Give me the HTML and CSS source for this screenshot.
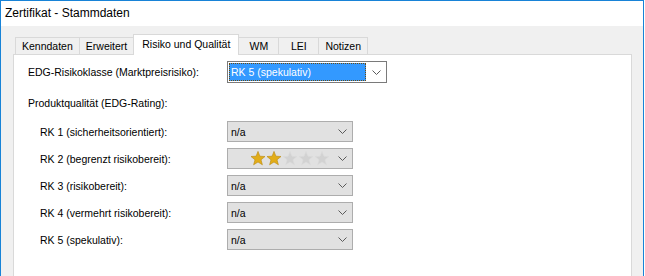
FILE: index.html
```html
<!DOCTYPE html>
<html lang="de">
<head>
    <meta charset="UTF-8">
    <title>Zertifikat - Stammdaten</title>
    <link rel="stylesheet" href="styles.css">
</head>
<body>
    <div class="window">
        <div class="titlebar">Zertifikat - Stammdaten</div>

        <div class="client">
            <div class="tabs">
                <div class="tab">Kenndaten</div>
                <div class="tab">Erweitert</div>
                <div class="tab active">Risiko und Qualität</div>
                <div class="tab">WM</div>
                <div class="tab">LEI</div>
                <div class="tab">Notizen</div>
            </div>

            <div class="panel">
                <div class="field-row">
                    <span class="field-label">EDG-Risikoklasse (Marktpreisrisiko):</span>
                    <div class="combo combo-wide combo-focus">
                        <span class="combo-value">RK 5 (spekulativ)</span>
                        <svg class="chevron" width="9" height="5" viewBox="0 0 9 5"><polyline points="0.5,0.5 4.5,4.5 8.5,0.5" /></svg>
                    </div>
                </div>

                <div class="section-label">Produktqualität (EDG-Rating):</div>

                <div class="rating-list">
                    <span class="field-label">RK 1 (sicherheitsorientiert):</span>
                    <div class="combo">
                        <span class="combo-value">n/a</span>
                        <svg class="chevron" width="9" height="5" viewBox="0 0 9 5"><polyline points="0.5,0.5 4.5,4.5 8.5,0.5" /></svg>
                    </div>

                    <span class="field-label">RK 2 (begrenzt risikobereit):</span>
                    <div class="combo">
                        <span class="stars">
                            <svg class="star on" width="16" height="15" viewBox="0 0 16 15"><polygon points="8,0.4 9.9,5.2 15,5.5 11,8.8 12.4,13.8 8,11 3.6,13.8 5,8.8 1,5.5 6.1,5.2" /></svg>
                            <svg class="star on" width="16" height="15" viewBox="0 0 16 15"><polygon points="8,0.4 9.9,5.2 15,5.5 11,8.8 12.4,13.8 8,11 3.6,13.8 5,8.8 1,5.5 6.1,5.2" /></svg>
                            <svg class="star" width="16" height="15" viewBox="0 0 16 15"><polygon points="8,0.4 9.9,5.2 15,5.5 11,8.8 12.4,13.8 8,11 3.6,13.8 5,8.8 1,5.5 6.1,5.2" /></svg>
                            <svg class="star" width="16" height="15" viewBox="0 0 16 15"><polygon points="8,0.4 9.9,5.2 15,5.5 11,8.8 12.4,13.8 8,11 3.6,13.8 5,8.8 1,5.5 6.1,5.2" /></svg>
                            <svg class="star" width="16" height="15" viewBox="0 0 16 15"><polygon points="8,0.4 9.9,5.2 15,5.5 11,8.8 12.4,13.8 8,11 3.6,13.8 5,8.8 1,5.5 6.1,5.2" /></svg>
                        </span>
                        <svg class="chevron" width="9" height="5" viewBox="0 0 9 5"><polyline points="0.5,0.5 4.5,4.5 8.5,0.5" /></svg>
                    </div>

                    <span class="field-label">RK 3 (risikobereit):</span>
                    <div class="combo">
                        <span class="combo-value">n/a</span>
                        <svg class="chevron" width="9" height="5" viewBox="0 0 9 5"><polyline points="0.5,0.5 4.5,4.5 8.5,0.5" /></svg>
                    </div>

                    <span class="field-label">RK 4 (vermehrt risikobereit):</span>
                    <div class="combo">
                        <span class="combo-value">n/a</span>
                        <svg class="chevron" width="9" height="5" viewBox="0 0 9 5"><polyline points="0.5,0.5 4.5,4.5 8.5,0.5" /></svg>
                    </div>

                    <span class="field-label">RK 5 (spekulativ):</span>
                    <div class="combo">
                        <span class="combo-value">n/a</span>
                        <svg class="chevron" width="9" height="5" viewBox="0 0 9 5"><polyline points="0.5,0.5 4.5,4.5 8.5,0.5" /></svg>
                    </div>
                </div>
            </div>
        </div>
    </div>
</body>
</html>
```

FILE: styles.css
```css
:root {
    --window-border: #1883d7;
    --face: #f0f0f0;
    --tab-border: #d9d9d9;
    --combo-bg: #e1e1e1;
    --combo-border: #adadad;
    --highlight: #3399ff;
    --text: #000;
}

* {
    margin: 0;
    padding: 0;
    box-sizing: border-box;
}

body {
    background: #fff;
    color: var(--text);
    font-family: "Liberation Sans", Arial, sans-serif;
    font-size: 10.5px;
}

.window {
    width: 644px;
    height: 276px;
    border: 1px solid var(--window-border);
    border-bottom: none;
    display: flex;
    flex-direction: column;
    overflow: hidden;
    white-space: nowrap;
}

.titlebar {
    height: 25px;
    line-height: 24px;
    padding-left: 4px;
    background: #fff;
    font-size: 12px;
}

.client {
    flex: 1;
    display: flex;
    flex-direction: column;
    background: var(--face);
    padding: 0 11px 0 12px;
}

/* tab strip */
.tabs {
    height: 28px;
    display: flex;
    align-items: flex-end;
    padding-left: 2px;
}

.tab {
    min-width: 41px;
    height: 17px;
    line-height: 16px;
    padding: 0 6px;
    margin-right: -1px;
    text-align: center;
    border: 1px solid var(--tab-border);
    border-bottom: none;
    background: var(--face);
}

.tab.active {
    height: 21px;
    line-height: 18px;
    margin-bottom: -1px;
    padding: 0 8px;
    background: #fff;
    position: relative;
    z-index: 1;
}

/* tab page */
.panel {
    flex: 1;
    background: #fff;
    border: 1px solid var(--tab-border);
    border-bottom: none;
    padding: 6px 0 0 14px;
}

.field-row {
    display: flex;
    align-items: center;
    height: 22px;
}

.field-row .field-label {
    width: 199px;
}

.section-label {
    margin-top: 12px;
    height: 16px;
    line-height: 16px;
}

.rating-list {
    margin-top: 10px;
    padding-left: 12px;
    display: grid;
    grid-template-columns: 187px 126px;
    grid-auto-rows: 21px;
    row-gap: 6px;
    align-items: center;
}

/* combo boxes */
.combo {
    height: 21px;
    display: flex;
    align-items: center;
    border: 1px solid var(--combo-border);
    background: var(--combo-bg);
    padding: 0 5px 0 3px;
}

.combo-value {
    flex: 1;
}

.combo-wide {
    width: 160px;
    height: 22px;
    border-color: #7a7a7a;
    background: #fff;
    padding: 1px 5px 1px 1px;
}

.combo-focus .combo-value {
    height: 18px;
    line-height: 16px;
    margin-right: 6px;
    padding-left: 1px;
    background: var(--highlight);
    color: #fff;
    border: 1px dotted #6b4a10;
}

.chevron {
    flex: none;
    fill: none;
    stroke: #5a5a5a;
    stroke-width: 1;
}

.stars {
    flex: 1;
    display: flex;
    justify-content: flex-end;
    padding-right: 8px;
}

.star polygon {
    fill: #d2d2d2;
    stroke: #dcdcdc;
    stroke-width: 0.6;
}

.star.on polygon {
    fill: #e2ad18;
    stroke: #b8880e;
}
```
